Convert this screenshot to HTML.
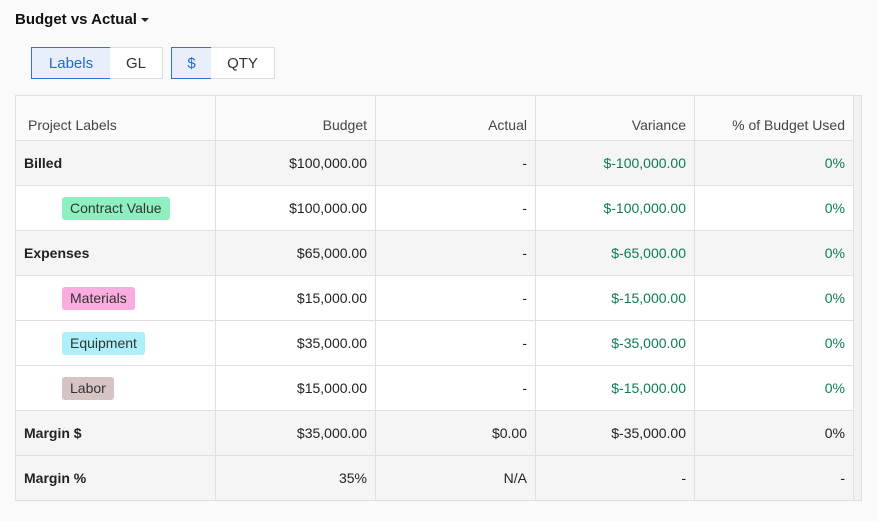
<!DOCTYPE html><html><head><style>
body{margin:0;width:877px;height:521px;background:#fafafa;font-family:"Liberation Sans",sans-serif;color:#222;position:relative;overflow:hidden}
.t{position:absolute;left:15px;top:11px;font-size:15px;font-weight:bold;color:#111}
.car{display:inline-block;border-left:4px solid transparent;border-right:4px solid transparent;border-top:4px solid #222;vertical-align:middle;margin-left:4px}
.btn{position:absolute;top:47px;height:32px;box-sizing:border-box;border:1px solid #ddd;background:#fff;font-size:15px;line-height:31px;text-align:center;color:#333}
.on{background:#e8effa;border-color:#2f74d0;color:#1f6ad0}
table{position:absolute;left:15px;top:95px;border-collapse:collapse;font-size:14px;table-layout:fixed;width:838px}
td{border:1px solid #e0e0e0;height:44px;padding:0 8px;text-align:right;white-space:nowrap}
td:first-child{text-align:left}
tr.g td{background:#f5f5f5}
tr.w td{background:#fff}
tr.h td{background:#fafafa;height:37px;vertical-align:bottom;padding-bottom:7px;color:#444}
.b td:first-child{font-weight:bold}
.gr{color:#0b7d50}
.tag{display:inline-block;margin-left:38px;padding:0 8px;height:23px;line-height:23px;border-radius:3px;color:#333}
.sb{position:absolute;left:853px;top:95px;width:9px;height:406px;background:#f2f2f2;border:1px solid #e0e0e0;border-left:none;box-sizing:border-box}
</style></head><body>
<div class="t">Budget vs Actual<span class="car"></span></div>
<div class="btn on" style="left:31px;width:80px">Labels</div>
<div class="btn" style="left:110px;width:53px;border-left:none">GL</div>
<div class="btn on" style="left:171px;width:41px">$</div>
<div class="btn" style="left:211px;width:64px;border-left:none">QTY</div>
<div class="sb"></div>
<table>
<colgroup><col style="width:200px"><col style="width:160px"><col style="width:160px"><col style="width:159px"><col style="width:159px"></colgroup>
<tr class="h"><td style="padding-left:12px">Project Labels</td><td>Budget</td><td>Actual</td><td>Variance</td><td>% of Budget Used</td></tr>
<tr class="g b"><td>Billed</td><td>$100,000.00</td><td>-</td><td class="gr">$-100,000.00</td><td class="gr">0%</td></tr>
<tr class="w"><td><span class="tag" style="background:#8ef0c0">Contract Value</span></td><td>$100,000.00</td><td>-</td><td class="gr">$-100,000.00</td><td class="gr">0%</td></tr>
<tr class="g b"><td>Expenses</td><td>$65,000.00</td><td>-</td><td class="gr">$-65,000.00</td><td class="gr">0%</td></tr>
<tr class="w"><td><span class="tag" style="background:#f9ace0">Materials</span></td><td>$15,000.00</td><td>-</td><td class="gr">$-15,000.00</td><td class="gr">0%</td></tr>
<tr class="w"><td><span class="tag" style="background:#aef0fa">Equipment</span></td><td>$35,000.00</td><td>-</td><td class="gr">$-35,000.00</td><td class="gr">0%</td></tr>
<tr class="w"><td><span class="tag" style="background:#d6c4c4">Labor</span></td><td>$15,000.00</td><td>-</td><td class="gr">$-15,000.00</td><td class="gr">0%</td></tr>
<tr class="g b"><td>Margin $</td><td>$35,000.00</td><td>$0.00</td><td>$-35,000.00</td><td>0%</td></tr>
<tr class="g b"><td>Margin %</td><td>35%</td><td>N/A</td><td>-</td><td>-</td></tr>
</table>
</body></html>
